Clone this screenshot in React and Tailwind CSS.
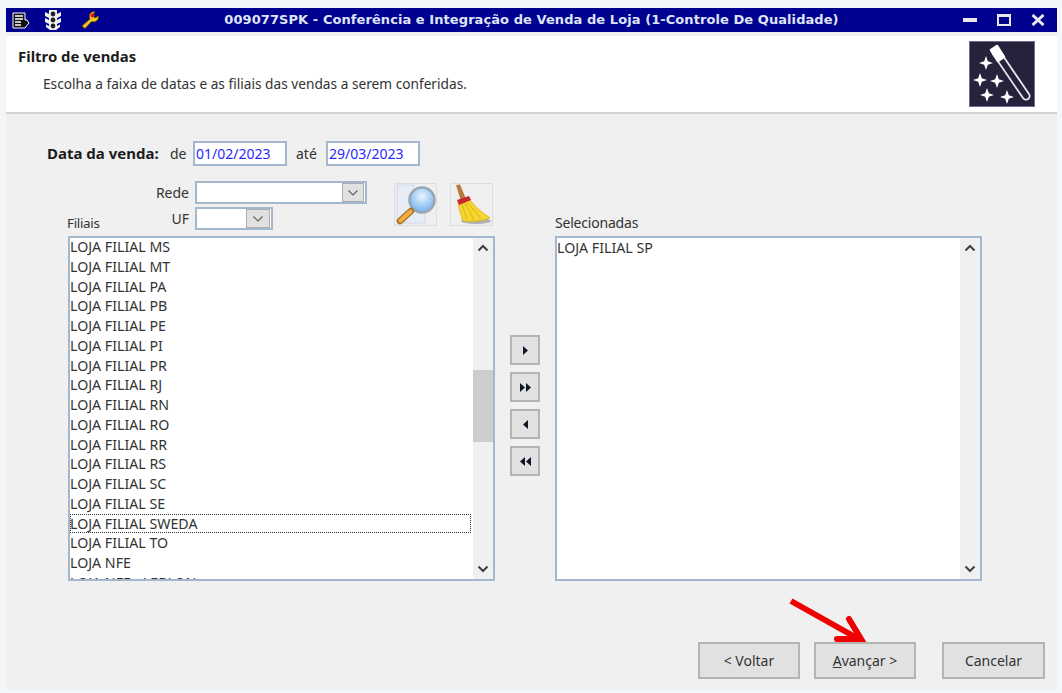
import { useState } from "react";

const FONT = "font-['Noto_Sans','Open_Sans',sans-serif]";

const FILIAIS = ["MS", "MT", "PA", "PB", "PE", "PI", "PR", "RJ", "RN", "RO", "RR", "RS", "SC", "SE", "SWEDA", "TO"];

function ChevronUp() {
  return (
    <svg width="12" height="8" viewBox="0 0 12 8">
      <path d="M1.5 6.5 L6 2 L10.5 6.5" fill="none" stroke="#404040" strokeWidth="2" />
    </svg>
  );
}

function ChevronDown({ color = "#404040", width = 2 }) {
  return (
    <svg width="12" height="8" viewBox="0 0 12 8">
      <path d="M1.5 1.5 L6 6 L10.5 1.5" fill="none" stroke={color} strokeWidth={width} />
    </svg>
  );
}

function MenuIcon() {
  return (
    <svg width="18" height="17" viewBox="0 0 18 17">
      <path d="M1 1 H13 V8 H15 L17 11 L13 16 H1 Z" fill="#111" stroke="#fff" strokeWidth="1" />
      <path d="M3 4 H11 M3 7 H11 M3 10 H9 M3 13 H9" stroke="#fff" strokeWidth="1.4" />
    </svg>
  );
}

function TrafficIcon() {
  return (
    <svg width="20" height="22" viewBox="0 0 20 22">
      <path d="M6 1 H14 V5 L18 3 V7 L14 9 V11 L18 9 V13 L14 15 V17 L17 15.5 V18 L13 21 H7 L3 18 V15.5 L6 17 V15 L2 13 V9 L6 11 V9 L2 7 V3 L6 5 Z" fill="#f2f2f2" />
      <circle cx="10" cy="5" r="2.4" fill="#222" />
      <circle cx="10" cy="11" r="2.4" fill="#222" />
      <circle cx="10" cy="17" r="2.4" fill="#222" />
    </svg>
  );
}

function WrenchIcon() {
  return (
    <svg width="20" height="20" viewBox="0 0 20 20">
      <path d="M2 16 L10 9 C8 5 11 1 15 2 L12.5 5 L15 8 L18.5 6 C19 10 15 13 11.5 11.5 L5 18.5 Z" fill="#f5c518" stroke="#6b5200" strokeWidth="0.8" />
      <circle cx="12.5" cy="5.5" r="2" fill="#e01010" />
    </svg>
  );
}

function WandIcon() {
  const Star = ({ x, y, r = 7 }) => (
    <path
      d={`M${x} ${y - r} L${x + 1.8} ${y - 1.8} L${x + r} ${y} L${x + 1.8} ${y + 1.8} L${x} ${y + r} L${x - 1.8} ${y + 1.8} L${x - r} ${y} L${x - 1.8} ${y - 1.8} Z`}
      fill="#fff"
    />
  );
  return (
    <svg width="64" height="64" viewBox="0 0 64 64">
      <path d="M26 10 L56 54" stroke="#e8e8ee" strokeWidth="9" strokeLinecap="round" />
      <path d="M26 10 L56 54" stroke="#25233c" strokeWidth="5.5" strokeLinecap="round" />
      <path d="M21 8 L27 4 L34 15 L28 19 Z" fill="#fff" stroke="#fff" strokeWidth="2.5" strokeLinejoin="round" />
      <Star x={16} y={21} />
      <Star x={10} y={38} />
      <Star x={27} y={39} />
      <Star x={17} y={53} />
      <Star x={37} y={55} />
    </svg>
  );
}

function SearchIcon() {
  return (
    <svg width="43" height="43" viewBox="0 0 43 43">
      <defs>
        <radialGradient id="lens" cx="50%" cy="35%" r="65%">
          <stop offset="0%" stopColor="#eaf6ff" />
          <stop offset="100%" stopColor="#6fb0ee" />
        </radialGradient>
      </defs>
      <rect x="0.5" y="0.5" width="42" height="42" fill="#efefef" stroke="#dedede" />
      <path d="M3 2 H20 L31 12 V40 H3 Z" fill="#e6ebf5" stroke="#d3dae6" />
      <path d="M20 2 V12 H31" fill="#f6f8fc" stroke="#d3dae6" />
      <circle cx="28" cy="17" r="12.5" fill="url(#lens)" stroke="#9aa5b3" strokeWidth="2.5" />
      <path d="M17 28 L6 38" stroke="#a8742a" strokeWidth="6.5" strokeLinecap="round" />
      <path d="M16.5 28.5 L6.5 37.5" stroke="#f5ad40" strokeWidth="4" strokeLinecap="round" />
    </svg>
  );
}

function BroomIcon() {
  return (
    <svg width="43" height="43" viewBox="0 0 43 43">
      <rect x="0.5" y="0.5" width="42" height="42" fill="#efefef" stroke="#dedede" />
      <ellipse cx="26" cy="38" rx="15" ry="3" fill="#b0b0b0" />
      <path d="M6 2 L10 1.5 L16 16 L11 18 Z" fill="#b8793a" />
      <path d="M8 19 L20 17 C25 24 33 30 40 35 C33 38 22 39 13 38 C11 32 9 26 8 19 Z" fill="#f4d630" stroke="#dcae12" strokeWidth="0.8" />
      <path d="M12 21 L17 37 M15 20 L24 37 M18 20 L31 36" stroke="#dcae12" strokeWidth="0.9" />
      <path d="M7 17 L19 13 L21 17 L9 22 Z" fill="#c7282c" />
    </svg>
  );
}

function Triangles({ dir, count }) {
  const d = dir === "right" ? "M0 0 L5 4.5 L0 9 Z" : "M5 0 L0 4.5 L5 9 Z";
  return (
    <svg width={count === 2 ? 11 : 5} height="9" viewBox={count === 2 ? "0 0 11 9" : "0 0 5 9"}>
      <path d={d} fill="#101828" />
      {count === 2 && <path d={d} transform="translate(6 0)" fill="#101828" />}
    </svg>
  );
}

function ComboBox({ width, button }) {
  return (
    <div className={`${width} h-[23px] bg-white border-2 border-[#a3b8cc] flex justify-end items-center pr-[1px]`}>
      <div className={`${button} h-[19px] bg-[#e1e1e1] border border-[#adadad] flex items-center justify-center`}>
        <ChevronDown color="#606060" width={1.2} />
      </div>
    </div>
  );
}

function ScrollBar({ thumb }) {
  return (
    <div className="w-5 bg-[#f0f0f0] flex flex-col items-center justify-between shrink-0">
      <div className="h-[20px] flex items-center"><ChevronUp /></div>
      {thumb && <div className="w-full h-[72px] bg-[#cdcdcd] mb-[117px] mt-auto" />}
      <div className="h-[20px] flex items-center"><ChevronDown /></div>
    </div>
  );
}

function MoveButton({ dir, count }) {
  return (
    <button className="w-[30px] h-[30px] bg-[#e1e1e1] border-2 border-[#b4b4b4] flex items-center justify-center">
      <Triangles dir={dir} count={count} />
    </button>
  );
}

function FooterButton({ className = "", children }) {
  return (
    <button className={`h-[37px] bg-[#e1e1e1] border-2 border-[#b4b4b4] text-[14px] text-[#333] ${className}`}>
      {children}
    </button>
  );
}

export default function App() {
  const [inicio, setInicio] = useState("01/02/2023");
  const [fim, setFim] = useState("29/03/2023");

  return (
    <div className={`relative w-[1062px] h-[693px] overflow-hidden bg-[#f3f7fa] pt-2 pl-1.5 pr-[5px] pb-[3px] text-[#333] ${FONT}`}>
      <div className="w-full h-full flex flex-col bg-[#f0f0f0]">
        {/* Title bar */}
        <div className="h-6 shrink-0 bg-[#000090] flex items-center">
          <div className="w-[150px] flex items-center pl-1.5 gap-[13px]">
            <MenuIcon />
            <TrafficIcon />
            <div className="ml-1"><WrenchIcon /></div>
          </div>
          <div className="flex-1 text-center font-['DejaVu_Sans',sans-serif] font-bold text-[13px] tracking-[0.07px] text-[#dfe4f5] whitespace-nowrap">
            009077SPK - Conferência e Integração de Venda de Loja (1-Controle De Qualidade)
          </div>
          <div className="w-[150px] flex items-center justify-end pr-3 gap-5">
            <div className="w-[14px] h-1 bg-[#e8e8e8]" />
            <div className="w-[14px] h-3 border-2 border-t-[3px] border-[#e8e8e8]" />
            <svg width="14" height="12" viewBox="0 0 14 12">
              <path d="M1.5 1 L12.5 11 M12.5 1 L1.5 11" stroke="#e8e8e8" strokeWidth="3" />
            </svg>
          </div>
        </div>

        {/* Header */}
        <div className="mt-1 h-[78px] shrink-0 bg-white border-b-2 border-[#d2d2d2] flex justify-between pl-3 pr-[22px] pt-[5px]">
          <div>
            <p className="font-bold text-[14.9px] leading-[19px] mt-[6px] text-[#1c1c1c]">Filtro de vendas</p>
            <p className="text-[13.7px] leading-[19px] mt-2 ml-[25px]">Escolha a faixa de datas e as filiais das vendas a serem conferidas.</p>
          </div>
          <div className="w-[66px] h-[66px] bg-[#25233c] border border-[#6f6c98] flex items-center justify-center">
            <WandIcon />
          </div>
        </div>

        {/* Dates */}
        <div className="mt-[27px] ml-[41px] h-[25px] flex items-center text-[14px]">
          <span className="font-bold text-[15px] text-[#1c1c1c] w-[123px] whitespace-nowrap">Data da venda:</span>
          <span className="w-[23px]">de</span>
          <input
            value={inicio}
            onChange={(e) => setInicio(e.target.value)}
            className="w-[94px] h-[25px] px-[1px] bg-white border-2 border-[#a3b8cc] text-[14px] text-[#2a2aff] outline-none"
          />
          <span className="ml-[9px] w-[30px]">até</span>
          <input
            value={fim}
            onChange={(e) => setFim(e.target.value)}
            className="w-[94px] h-[25px] px-[1px] bg-white border-2 border-[#a3b8cc] text-[14px] text-[#2a2aff] outline-none"
          />
        </div>

        {/* Lists */}
        <div className="mt-[15px] ml-[62px] flex">
          <div className="w-[427px] flex flex-col">
            <div className="h-[55px] flex">
              <span className="w-[69px] self-end pb-[3px] -ml-[1px] text-[13.4px] tracking-[-0.3px]">Filiais</span>
              <div className="flex flex-col gap-[3px]">
                <div className="flex items-center">
                  <span className="w-[59px] pr-[6px] text-right text-[14px]">Rede</span>
                  <ComboBox width="w-[172px]" button="w-[22px]" />
                </div>
                <div className="flex items-center">
                  <span className="w-[59px] pr-[6px] text-right text-[14px]">UF</span>
                  <ComboBox width="w-[78px]" button="w-[24px]" />
                </div>
              </div>
              <div className="ml-[27px] mt-[2px] flex gap-[13px]">
                <SearchIcon />
                <BroomIcon />
              </div>
            </div>
            <div className="h-[345px] bg-white border-2 border-[#a3b8cc] flex overflow-hidden">
              <div className="flex-1 overflow-hidden -mt-[1px] text-[14.2px]">
                {FILIAIS.map((uf) => (
                  <div
                    key={uf}
                    className={`h-[19.75px] leading-[19px] mr-[2px] whitespace-nowrap ${uf === "SWEDA" ? "outline-1 outline-dotted outline-offset-[-1px] outline-[#333]" : ""}`}
                  >
                    LOJA FILIAL {uf}
                  </div>
                ))}
                <div className="h-[19.75px] leading-[19px]">LOJA NFE</div>
                <div className="h-[19.75px] leading-[19px]">LOJA NFE - LEBLON</div>
              </div>
              <ScrollBar thumb />
            </div>
          </div>

          <div className="ml-[15px] pt-[154px] flex flex-col gap-[7px]">
            <MoveButton dir="right" count={1} />
            <MoveButton dir="right" count={2} />
            <MoveButton dir="left" count={1} />
            <MoveButton dir="left" count={2} />
          </div>

          <div className="ml-[15px] w-[427px] flex flex-col">
            <div className="h-[55px] flex items-end pb-[3px] text-[14px] tracking-[-0.2px]">Selecionadas</div>
            <div className="h-[345px] bg-white border-2 border-[#a3b8cc] flex overflow-hidden">
              <div className="flex-1 text-[14.2px] leading-[19px]">LOJA FILIAL SP</div>
              <ScrollBar />
            </div>
          </div>
        </div>

        {/* Footer */}
        <div className="mt-[61px] pr-3 flex justify-end">
          <FooterButton className="w-[102px]">&lt; Voltar</FooterButton>
          <FooterButton className="w-[102px] ml-[14px]"><span className="underline">A</span>vançar &gt;</FooterButton>
          <FooterButton className="w-[103px] ml-[26px]">Cancelar</FooterButton>
        </div>
      </div>

      {/* Red arrow drawn over the dialog */}
      <svg className="absolute left-[785px] top-[594px]" width="85" height="52" viewBox="0 0 85 52">
        <path d="M6 7 L72 44" stroke="#f00000" strokeWidth="6" />
        <path d="M52 45 L76 45 L64 25" fill="none" stroke="#f00000" strokeWidth="6" strokeLinecap="round" strokeLinejoin="miter" />
      </svg>
    </div>
  );
}
